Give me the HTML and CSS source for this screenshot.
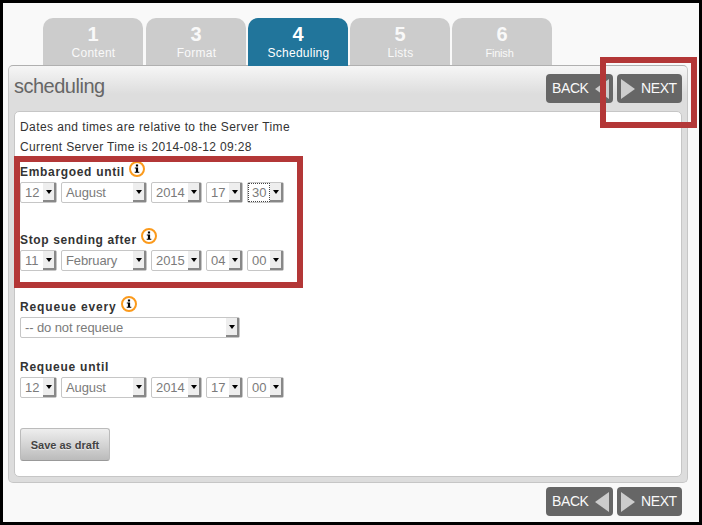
FILE: index.html
```html
<!DOCTYPE html>
<html lang="en">
<head>
<meta charset="utf-8">
<title>scheduling</title>
<link rel="stylesheet" href="styles.css">
</head>
<body>
<nav class="tabs">
  <div class="tab first"><b>1</b><span>Content</span></div>
  <div class="tab"><b>3</b><span>Format</span></div>
  <div class="tab active"><b>4</b><span>Scheduling</span></div>
  <div class="tab"><b>5</b><span>Lists</span></div>
  <div class="tab finish"><b>6</b><span>Finish</span></div>
</nav>
<main class="panel">
  <header class="head">
    <h1>scheduling</h1>
    <div class="pager">
      <a class="nav back"><span>BACK</span><svg width="14" height="20"><path d="M14 0v20L0 10z"/></svg></a>
      <a class="nav next"><svg width="14" height="20"><path d="M0 0v20L14 10z"/></svg><span>NEXT</span></a>
    </div>
  </header>
  <form class="content">
    <p class="info1">Dates and times are relative to the Server Time</p>
    <p class="info2">Current Server Time is 2014-08-12 09:28</p>
    <div class="label"><span class="embargo">Embargoed until</span><i class="help low"><svg width="16" height="16"><circle cx="8" cy="8" r="7"/><path d="M6.9 3.6h2.2v1.9H6.9zM5.8 6.5h3.3v4.2h1.2v1H5.7v-1h1.2V7.5H5.8z"/></svg></i></div>
    <div class="row">
      <div class="sel w2"><span>12</span><i></i></div><div class="sel month"><span>August</span><i></i></div><div class="sel year"><span>2014</span><i></i></div><div class="sel w2"><span>17</span><i></i></div><div class="sel w2 focus"><span>30</span><i></i></div>
    </div>
    <div class="label gap-a"><span class="stop">Stop sending after</span><i class="help"><svg width="16" height="16"><circle cx="8" cy="8" r="7"/><path d="M6.9 3.6h2.2v1.9H6.9zM5.8 6.5h3.3v4.2h1.2v1H5.7v-1h1.2V7.5H5.8z"/></svg></i></div>
    <div class="row">
      <div class="sel w2"><span>11</span><i></i></div><div class="sel month"><span>February</span><i></i></div><div class="sel year"><span>2015</span><i></i></div><div class="sel w2"><span>04</span><i></i></div><div class="sel w2"><span>00</span><i></i></div>
    </div>
    <div class="label gap-b"><span class="every">Requeue every</span><i class="help low"><svg width="16" height="16"><circle cx="8" cy="8" r="7"/><path d="M6.9 3.6h2.2v1.9H6.9zM5.8 6.5h3.3v4.2h1.2v1H5.7v-1h1.2V7.5H5.8z"/></svg></i></div>
    <div class="row"><div class="sel wide"><span>-- do not requeue</span><i></i></div></div>
    <div class="label gap-c"><span class="until">Requeue until</span></div>
    <div class="row">
      <div class="sel w2"><span>12</span><i></i></div><div class="sel month"><span>August</span><i></i></div><div class="sel year"><span>2014</span><i></i></div><div class="sel w2"><span>17</span><i></i></div><div class="sel w2"><span>00</span><i></i></div>
    </div>
    <button type="button" class="save">Save as draft</button>
  </form>
</main>
<footer class="foot">
  <div class="pager">
    <a class="nav back"><span>BACK</span><svg width="14" height="20"><path d="M14 0v20L0 10z"/></svg></a>
    <a class="nav next"><svg width="14" height="20"><path d="M0 0v20L14 10z"/></svg><span>NEXT</span></a>
  </div>
</footer>
<div class="mark mark-dates"></div>
<div class="mark mark-next"></div>
</body>
</html>
```
FILE: styles.css
```css
* { box-sizing: border-box; }
body {
  margin: 0; width: 702px; height: 525px; overflow: hidden; position: relative;
  border: 3px solid #000; background: #f9f9f9; color: #333;
  font-family: "Liberation Sans", Arial, sans-serif; font-size: 12px;
}
.tabs { display: flex; gap: 2px; padding: 15px 0 0 40px; height: 62px; }
.tab {
  width: 100px; height: 47px; border-radius: 10px 10px 0 0; background: #ccc; color: #f9f9f9;
  display: flex; flex-direction: column; align-items: center; letter-spacing: .25px;
}
.first { margin-right: 1px; }
.tab b { font-size: 20px; line-height: 22px; margin-top: 5px; letter-spacing: 0; }
.tab span { line-height: 14px; margin-top: 1px; padding-left: 1px; }
.tab.finish span { font-size: 11px; letter-spacing: -.2px; padding: 0 5px 0 0; }
.active { background: #21759b; color: #fff; height: 48px; position: relative; z-index: 1; }
.panel {
  margin-left: 5px; width: 680px; height: 418px; padding: 0 5px; border: 1px solid #c6c6c6;
  border-top-color: #b0b0b0; border-radius: 5px;
  background: linear-gradient(#f6f6f6 0, #dedede 27px, #ddd 28px);
}
.head { height: 45px; display: flex; justify-content: space-between; }
h1 { margin: 7px 0 0; font-weight: 400; font-size: 20px; line-height: 26px; color: #666; letter-spacing: -.5px; }
.pager { display: flex; gap: 4px; }
.head .pager { margin-top: 8px; }
.nav {
  height: 29px; border-radius: 4px; background: #666; color: #f9f9f9;
  display: flex; align-items: center; font-size: 14px; line-height: 29px; letter-spacing: -.4px;
}
.nav svg { fill: #ccc; }
.back { width: 67px; padding-left: 6px; }
.back svg { margin-left: auto; margin-right: 4px; }
.next { width: 65px; padding-left: 4px; }
.next span { margin-left: 6px; }
.content {
  height: 366px; padding: 5px 5px 0; background: #fff; border: 1px solid #c6c6c6; border-radius: 5px;
}
p { margin: 0; height: 20px; line-height: 20px; white-space: nowrap; }
.info1 { letter-spacing: .41px; }
.info2 { letter-spacing: .35px; }
.label { height: 25px; display: flex; font-weight: 700; line-height: 15px; padding-top: 8px; }
.label span { white-space: nowrap; letter-spacing: .68px; }
.label .stop { letter-spacing: .63px; }
.label .every { letter-spacing: .86px; }
.label .until { letter-spacing: .76px; }
.help { margin: -5px 0 0 4px; height: 16px; }
.help.low { margin-top: -4px; }
.help svg { display: block; }
.help circle { fill: #fff; stroke: #fb9a1c; stroke-width: 2; }
.gap-a { margin-top: 22px; }
.gap-b { margin-top: 21px; }
.gap-c { margin-top: 14px; }
.row { display: flex; gap: 4px; height: 21px; }
.sel {
  height: 21px; border: 1px solid #c6c6c6; border-radius: 2px; display: flex; justify-content: space-between;
  font-size: 13px; line-height: 19px; color: #7b7b7b; white-space: nowrap; letter-spacing: -.1px;
}
.sel span { padding-left: 4px; }
.sel i {
  width: 13px; height: 19px; background: #eee; border: solid #888; border-width: 0 2px 2px 0;
  display: flex; justify-content: center; align-items: center;
}
.sel i::before { content: ""; border: solid transparent; border-width: 4px 3.5px 0; border-top-color: #000; }
.w2 { width: 37px; }
.month { width: 86px; }
.year { width: 51px; }
.wide { width: 220px; }
.focus span { outline: 1px dotted #444; outline-offset: -1px; padding-right: 4px; }
.save {
  display: block; margin-top: 30px; width: 90px; height: 33px; padding: 0; border: 1px solid #bbb;
  border-bottom-color: #999; border-radius: 3px; background: linear-gradient(#eee, #bbb);
  font: bold 11px/30px "Liberation Sans", sans-serif; color: #444; text-shadow: 0 1px 1px #eee;
}
.foot { display: flex; justify-content: flex-end; padding: 4px 17px 0 0; }
.mark { position: absolute; border: 6px solid #b33737; pointer-events: none; }
.mark-dates { left: 11px; top: 153px; width: 289px; height: 132px; }
.mark-next { left: 597px; top: 54px; width: 97px; height: 71px; z-index: 2; }
```
